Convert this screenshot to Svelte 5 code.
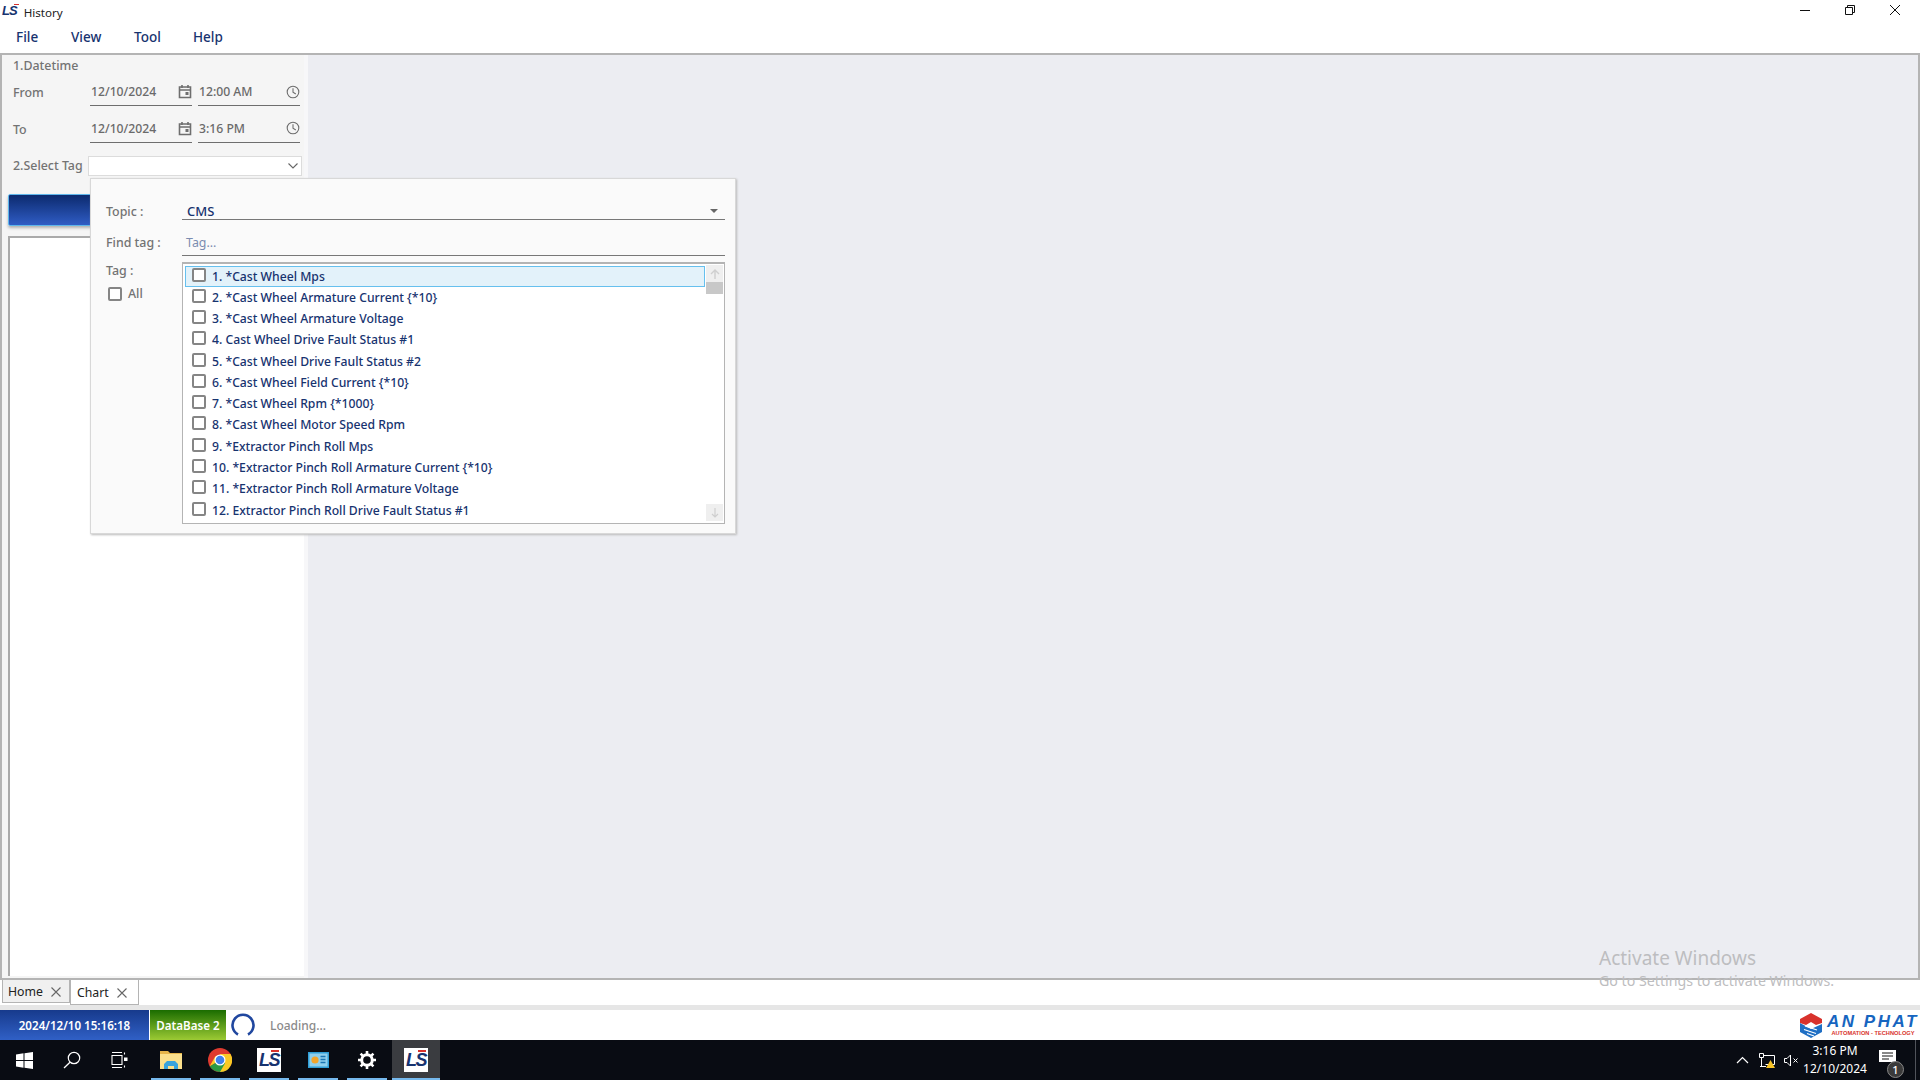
<script>
  const tags = [
    "1. *Cast Wheel Mps",
    "2. *Cast Wheel Armature Current {*10}",
    "3. *Cast Wheel Armature Voltage",
    "4. Cast Wheel Drive Fault Status #1",
    "5. *Cast Wheel Drive Fault Status #2",
    "6. *Cast Wheel Field Current {*10}",
    "7. *Cast Wheel Rpm {*1000}",
    "8. *Cast Wheel Motor Speed Rpm",
    "9. *Extractor Pinch Roll Mps",
    "10. *Extractor Pinch Roll Armature Current {*10}",
    "11. *Extractor Pinch Roll Armature Voltage",
    "12. Extractor Pinch Roll Drive Fault Status #1",
  ];
  const menus = ["File", "View", "Tool", "Help"];
</script>

{#snippet calendar()}
  <svg class="ico" width="14" height="15" viewBox="0 0 14 15">
    <path d="M1.5 3h11v10.5h-11z M1.5 6h11" fill="none" stroke="#6e6e6e" stroke-width="1.6" />
    <path d="M4 1v3M10 1v3" stroke="#6e6e6e" stroke-width="1.6" />
    <rect x="7.5" y="8" width="3" height="3" fill="#6e6e6e" />
  </svg>
{/snippet}

{#snippet clock()}
  <svg class="ico" width="14" height="14" viewBox="0 0 14 14">
    <circle cx="7" cy="7" r="5.8" fill="none" stroke="#6e6e6e" stroke-width="1.1" />
    <path d="M7 3.2V7.2L9.8 9" fill="none" stroke="#6e6e6e" stroke-width="1.1" />
  </svg>
{/snippet}

{#snippet lsLogo()}
  <span class="ls-logo">LS<i></i></span>
{/snippet}

<div class="window">
  <div class="titlebar">
    <span class="title-logo">LS<i></i></span>
    <span class="title-text">History</span>
    <div class="win-controls">
      <svg width="10" height="10" viewBox="0 0 10 10"><path d="M0 5.5h10" stroke="#111" /></svg>
      <svg width="10" height="10" viewBox="0 0 10 10"><path d="M.5 2.5h7v7h-7zM2.5 2.5v-2h7v7h-2" fill="none" stroke="#111" /></svg>
      <svg width="10" height="10" viewBox="0 0 10 10"><path d="M0 0l10 10M10 0L0 10" stroke="#111" /></svg>
    </div>
  </div>
  <nav class="menubar">
    {#each menus as m}<span>{m}</span>{/each}
  </nav>

  <div class="workspace">
    <aside class="sidebar">
      <div class="section">1.Datetime</div>
      <div class="date-row first">
        <label>From</label>
        <div class="field date"><span>12/10/2024</span>{@render calendar()}</div>
        <div class="field time"><span>12:00 AM</span>{@render clock()}</div>
      </div>
      <div class="date-row">
        <label>To</label>
        <div class="field date"><span>12/10/2024</span>{@render calendar()}</div>
        <div class="field time"><span>3:16 PM</span>{@render clock()}</div>
      </div>
      <div class="tag-row">
        <span>2.Select Tag</span>
        <div class="combo">
          <svg width="10" height="6" viewBox="0 0 10 6"><path d="M.5 .5L5 5 9.500 .5" fill="none" stroke="#666" stroke-width="1.1" /></svg>
        </div>
      </div>
      <div class="blue-btn"></div>
      <div class="tree"></div>
    </aside>
    <main class="content"></main>

    <div class="popup">
      <div class="pop-row topic">
        <span class="pop-label">Topic :</span>
        <div class="pop-input"><span>CMS</span><i class="caret"></i></div>
      </div>
      <div class="pop-row find">
        <span class="pop-label">Find tag :</span>
        <div class="pop-input placeholder"><span>Tag...</span></div>
      </div>
      <div class="pop-body">
        <div class="pop-side">
          <span class="pop-label">Tag :</span>
          <div class="all"><i class="check"></i><span>All</span></div>
        </div>
        <div class="list">
          <div class="rows">
            {#each tags as t, i}
              <div class="row" class:active={i === 0}><i class="check"></i><span>{t}</span></div>
            {/each}
          </div>
          <div class="scroll">
            <div class="sbtn">
              <svg width="10" height="10" viewBox="0 0 10 10"><path d="M5 10V1M1 5l4-4 4 4" fill="none" stroke="#cfcfcf" stroke-width="1.4" /></svg>
            </div>
            <div class="thumb"></div>
            <div class="track"></div>
            <div class="sbtn">
              <svg width="10" height="10" viewBox="0 0 10 10"><path d="M5 0v9M2 6l3 3 3-3" fill="none" stroke="#cfcfcf" stroke-width="1.2" /></svg>
            </div>
          </div>
        </div>
      </div>
    </div>
  </div>

  <div class="tabs">
    <div class="tab home"><span>Home</span><svg width="10" height="10" viewBox="0 0 10 10"><path d="M.5 .5l9 9M9.500 .5l-9 9" stroke="#666" stroke-width="1.100" /></svg></div>
    <div class="tab chart"><span>Chart</span><svg width="10" height="10" viewBox="0 0 10 10"><path d="M.5 .5l9 9M9.500 .5l-9 9" stroke="#666" stroke-width="1.100" /></svg></div>
  </div>
  <div class="tab-gap"></div>

  <div class="status">
    <div class="clock-box">2024/12/10 15:16:18</div>
    <div class="db-box">DataBase 2</div>
    <svg class="spinner" width="24" height="24" viewBox="0 0 24 24">
      <path d="M7 21.500A10.500 10.500 0 1 1 17 21.500" fill="none" stroke="#20479f" stroke-width="2.600" />
    </svg>
    <span class="loading">Loading...</span>
    <div class="brand">
      <svg width="22" height="25" viewBox="0 0 22 25">
        <path d="M11 0L22 6v4l-6 2-5-3-5 3-6-2V6z" fill="#d8322c" />
        <path d="M0 10l11 6 11-5v8l-11 6-11-6z" fill="#1f6fc4" />
        <path d="M5 13l12 4M4 16.500l12 4M7 20.500l7 2.500" stroke="#fff" stroke-width="1.200" />
      </svg>
      <div class="brand-text">
        <b>AN PHAT</b>
        <small>AUTOMATION - TECHNOLOGY</small>
      </div>
    </div>
  </div>

  <footer class="taskbar">
    <div class="task"><svg width="17" height="17" viewBox="0 0 17 17"><path d="M0 2.400L7.500 1.300V8H0zM8.500 1.200L17 0V8H8.500zM0 9h7.500v6.700L0 14.600zM8.500 9H17v8l-8.500-1.200z" fill="#fff" /></svg></div>
    <div class="task"><svg width="18" height="18" viewBox="0 0 18 18"><circle cx="11" cy="7" r="5.700" fill="none" stroke="#fff" stroke-width="1.200" /><path d="M7 11.200L1 17" stroke="#fff" stroke-width="1.300" /></svg></div>
    <div class="task"><svg width="18" height="16" viewBox="0 0 18 16"><path d="M1 3.500h10v9H1zM1 .5h10M1 15.500h10M13.500 .5v2M13.500 13.500v2" fill="none" stroke="#fff" stroke-width="1.100" /><rect x="13" y="5.500" width="3.500" height="3.500" fill="#fff" /></svg></div>
    <div class="task open"><svg width="22" height="22" viewBox="0 0 22 22"><path d="M0 2h8l2 2h12v3H0z" fill="#e6b54a" /><path d="M0 5h22v15H0z" fill="#fbe08c" /><path d="M4 20v-5l3-3h8l3 3v5h-4v-3H8v3z" fill="#39a3dc" /></svg></div>
    <div class="task open"><svg width="24" height="24" viewBox="0 0 24 24"><circle cx="12" cy="12" r="12" fill="#de3b30" /><path d="M12 12L1.800 18.300A12 12 0 0 0 12 24a12 12 0 0 0 10.400-6z" fill="#2a9a45" /><path d="M12 12l-10.400 6.300L7.500 8zM12 6h10.500A12 12 0 0 1 12 24l5.200-9z" fill="#f9c925" /><circle cx="12" cy="12" r="5.500" fill="#fff" /><circle cx="12" cy="12" r="4.300" fill="#3f81ec" /></svg></div>
    <div class="task open">{@render lsLogo()}</div>
    <div class="task open"><svg width="21" height="16" viewBox="0 0 21 16"><rect width="21" height="16" fill="#2f9fd8" /><rect x="1.500" y="1.500" width="18" height="13" fill="#8fd0ee" /><circle cx="7" cy="8" r="3.600" fill="#f2a52c" /><path d="M12.500 4.500h5M12.500 7.500h5M12.500 10.500h5" stroke="#1b76b5" stroke-width="1.500" /></svg></div>
    <div class="task open"><svg width="18" height="18" viewBox="0 0 18 18"><circle cx="9" cy="9" r="5.300" fill="none" stroke="#fff" stroke-width="3" /><path d="M9 0v3.500M9 14.500V18M0 9h3.500M14.500 9H18M2.600 2.600l2.500 2.500M12.900 12.900l2.500 2.500M15.400 2.600l-2.500 2.500M5.100 12.900l-2.500 2.500" stroke="#fff" stroke-width="2.600" /></svg></div>
    <div class="task open current">{@render lsLogo()}</div>

    <div class="tray">
      <svg width="13" height="8" viewBox="0 0 13 8"><path d="M1 7l5.500-5.500L12 7" fill="none" stroke="#fff" stroke-width="1.200" /></svg>
      <svg class="net" width="17" height="15" viewBox="0 0 17 15"><path d="M.5 .5h4v4h-4zM4.500 2.500h11v9h-9M2.500 4.500v9M1 13.500h6" fill="none" stroke="#fff" /><path d="M11.500 7l4.500 8H7z" fill="#f7c325" /></svg>
      <svg width="15" height="13" viewBox="0 0 15 13"><path d="M.5 4.500h2.500L6.500 1v11L3 8.500H.5z" fill="none" stroke="#fff" /><path d="M9.500 4.500l4 4M13.500 4.500l-4 4" stroke="#fff" /></svg>
      <div class="tray-clock"><span>3:16 PM</span><span>12/10/2024</span></div>
      <div class="notify">
        <svg width="17" height="15" viewBox="0 0 17 15"><path d="M0 0h17v12H0z" fill="#fff" /><path d="M3 3h11M3 6h11M3 9h7" stroke="#111" /></svg>
        <span class="badge">1</span>
      </div>
    </div>
    <div class="show-desktop"></div>
  </footer>

  <div class="activate">
    <div>Activate Windows</div>
    <small>Go to Settings to activate Windows.</small>
  </div>
</div>

<style>
  :global(body) {
    margin: 0;
    background: #fff;
  }

  .window {
    position: relative;
    width: 1920px;
    height: 1080px;
    display: flex;
    flex-direction: column;
    overflow: hidden;
    font-family: "Noto Sans", "Open Sans", sans-serif;
    font-size: 12.400px;
    font-weight: 500;
    color: #737373;
  }

  .titlebar {
    height: 24px;
    display: flex;
    align-items: center;
    flex: none;
  }
  .title-logo {
    position: relative;
    margin: -3px 0 0 2px;
    font: italic 900 13px/1 "Liberation Sans", sans-serif;
    letter-spacing: -1px;
    color: #17336f;
  }
  .title-logo i {
    position: absolute;
    top: 0;
    right: -2px;
    width: 5px;
    height: 1px;
    background: #d8322c;
  }
  .title-text {
    margin-left: 7px;
    font-size: 11.600px;
    font-weight: 400;
    color: #222;
  }
  .win-controls {
    margin-left: auto;
    margin-right: 20px;
    margin-top: -5px;
    display: flex;
    gap: 35px;
  }

  .menubar {
    height: 29px;
    flex: none;
    display: flex;
    align-items: center;
    box-sizing: border-box;
    padding: 0 0 4px 16px;
    font-size: 13.500px;
    font-weight: 500;
    color: #17336f;
  }
  .menubar span:nth-child(1) { width: 55px; }
  .menubar span:nth-child(2) { width: 63px; }
  .menubar span:nth-child(3) { width: 59px; }

  .workspace {
    position: relative;
    flex: 1;
    display: flex;
    border: 2px solid #b4b4b4;
    background: #ecedf2;
    min-height: 0;
  }

  .sidebar {
    width: 306px;
    flex: none;
    display: flex;
    flex-direction: column;
    background: #f5f5f5;
    border-right: 4px solid #f7f7f9;
    padding: 0 0 0 6px;
    box-sizing: border-box;
  }
  .section {
    margin: 2px 0 0 5px;
    line-height: 18px;
  }
  .date-row {
    display: flex;
    align-items: flex-end;
    height: 36.500px;
    margin-left: 5px;
    flex: none;
  }
  .date-row.first { height: 31px; }
  .date-row label {
    width: 77px;
    line-height: 20px;
    padding-bottom: 3px;
  }
  .field {
    display: flex;
    align-items: center;
    justify-content: space-between;
    height: 26px;
    box-sizing: border-box;
    border-bottom: 1px solid #6e6e6e;
    padding: 0 0 2px 1px;
    font-size: 12.200px;
    color: #6a6a6a;
  }
  .date { width: 102px; margin-right: 6px; }
  .time { width: 102px; }
  .ico { flex: none; }
  .tag-row {
    display: flex;
    align-items: center;
    margin: 13px 0 0 5px;
    height: 20px;
  }
  .tag-row span { width: 75px; flex: none; white-space: nowrap; }
  .combo {
    width: 214px;
    height: 20px;
    flex: none;
    box-sizing: border-box;
    background: #fff;
    border: 1px solid #dcdcdc;
    display: flex;
    align-items: center;
    justify-content: flex-end;
    padding-right: 3px;
  }
  .blue-btn {
    margin-top: 18px;
    height: 32px;
    width: 120px;
    flex: none;
    box-sizing: border-box;
    border-radius: 2px;
    background: linear-gradient(#0c2a6e, #2f5cc4);
    border: 1px solid #5fb6ea;
    box-shadow: 0 2px 3px #b0b0b0;
  }
  .tree {
    margin-top: 10px;
    flex: 1;
    background: #fff;
    border-left: 2px solid #aaa;
    border-top: 2px solid #aaa;
    margin-bottom: 2px;
  }
  .content { flex: 1; }

  .popup {
    position: absolute;
    left: 88px;
    top: 123px;
    width: 646px;
    height: 356px;
    box-sizing: border-box;
    background: #fafafa;
    border: 1px solid #d8d8d8;
    box-shadow: 1px 1px 2px #bbb;
    padding: 0 10px 0 15px;
    display: flex;
    flex-direction: column;
  }
  .pop-row {
    display: flex;
    flex: none;
  }
  .topic { height: 30px; margin-top: 11px; }
  .find { height: 36px; }
  .pop-label {
    width: 76px;
    flex: none;
    line-height: 43px;
    font-size: 12.400px;
    white-space: nowrap;
  }
  .find .pop-label { line-height: 45px; }
  .pop-input {
    flex: 1;
    display: flex;
    align-items: center;
    justify-content: space-between;
    box-sizing: border-box;
    border-bottom: 1px solid #777;
    padding: 12px 7px 0 5px;
    font-size: 13px;
    color: #17336f;
  }
  .find .pop-input { height: 36px; padding: 9px 0 0 4px; }
  .placeholder { color: #7b8cb0; font-size: 12.400px; font-weight: 400; }
  .caret {
    width: 0;
    height: 0;
    border-left: 4px solid transparent;
    border-right: 4px solid transparent;
    border-top: 4px solid #666;
  }
  .pop-body {
    flex: 1;
    display: flex;
    margin-top: 6px;
    margin-bottom: 9px;
    min-height: 0;
  }
  .pop-side {
    width: 76px;
    flex: none;
  }
  .pop-side .pop-label { display: block; line-height: 16px; margin-top: 1px; }
  .all {
    display: flex;
    align-items: center;
    gap: 6px;
    margin: 6px 0 0 2px;
    font-size: 12.400px;
  }
  .check {
    display: block;
    width: 14px;
    height: 14px;
    flex: none;
    box-sizing: border-box;
    border: 2px solid #858585;
    border-radius: 2px;
    background: #fff;
  }
  .list {
    flex: 1;
    display: flex;
    background: #fff;
    border: 1px solid #b4b4b4;
    border-top-width: 2px;
    padding: 1px 1px 2px 2px;
    min-width: 0;
  }
  .rows {
    flex: 1;
    display: flex;
    flex-direction: column;
    min-width: 0;
    padding-top: .5px;
  }
  .row {
    height: 21.270px;
    flex: none;
    display: flex;
    align-items: center;
    gap: 6px;
    padding-left: 7px;
    box-sizing: border-box;
    font-size: 12.200px;
    color: #17336f;
    white-space: nowrap;
  }
  .row .check { margin-top: -3px; }
  .row.active {
    background: #e3f2fa;
    outline: 1px solid #66c0ee;
    outline-offset: -1px;
  }
  .scroll {
    width: 17px;
    flex: none;
    display: flex;
    flex-direction: column;
    margin-left: 1px;
  }
  .sbtn {
    height: 17px;
    flex: none;
    background: #efefef;
    display: flex;
    align-items: center;
    justify-content: center;
  }
  .thumb {
    height: 12px;
    flex: none;
    background: #c8c8c8;
  }
  .track { flex: 1; }

  .tabs {
    height: 25px;
    flex: none;
    display: flex;
    align-items: flex-start;
    padding-left: 2px;
    font-size: 12.300px;
    font-weight: 400;
    color: #222;
  }
  .tab {
    display: flex;
    align-items: center;
    box-sizing: border-box;
    border: 1px solid #b4b4b4;
    border-top: 0;
    padding: 1px 0 0 5px;
    gap: 8px;
  }
  .home { width: 68px; height: 23px; background: #f0f0f0; }
  .chart { width: 69px; height: 25px; background: #fff; padding-left: 6px; }
  .tab-gap {
    height: 5px;
    flex: none;
    background: #e6e6e6;
  }

  .status {
    height: 30px;
    flex: none;
    display: flex;
    align-items: center;
    background: #fff;
  }
  .clock-box {
    width: 149px;
    height: 100%;
    display: flex;
    align-items: center;
    justify-content: center;
    background: linear-gradient(#173a8c, #3060c6);
    color: #fff;
    font-size: 11.600px;
    font-weight: 600;
  }
  .db-box {
    width: 76px;
    height: 100%;
    margin-left: 1px;
    display: flex;
    align-items: center;
    justify-content: center;
    background: linear-gradient(#1a6c00, #9cca34);
    color: #fff;
    font-size: 11.600px;
    font-weight: 600;
  }
  .spinner { margin-left: 5px; }
  .loading {
    margin-left: 15px;
    font-size: 12px;
    font-weight: 500;
    color: #8a8a8a;
  }
  .brand {
    margin-left: auto;
    display: flex;
    align-items: center;
    gap: 4px;
    width: 120px;
    flex: none;
  }
  .brand-text {
    display: flex;
    flex-direction: column;
    align-items: center;
    flex: 1;
  }
  .brand b {
    font: italic 900 17px/15px "Liberation Sans", sans-serif;
    color: #1665c0;
    letter-spacing: 2.500px;
    white-space: nowrap;
  }
  .brand small {
    font: 700 5.700px/8px "Liberation Sans", sans-serif;
    color: #d8322c;
    white-space: nowrap;
  }

  .taskbar {
    height: 40px;
    flex: none;
    display: flex;
    align-items: center;
    background: #090c13;
    color: #fff;
  }
  .task {
    position: relative;
    width: 48px;
    height: 100%;
    flex: none;
    margin-right: 1px;
    display: flex;
    align-items: center;
    justify-content: center;
  }
  .task:nth-child(-n + 3) { margin-right: 0; }
  .task:nth-child(4) { margin-left: 3px; }
  .task.open::after {
    content: "";
    position: absolute;
    left: 4px;
    right: 4px;
    bottom: 0;
    height: 2px;
    background: #76b9ed;
  }
  .task.current { background: #3a3c40; }
  .task.current::after { left: 0; right: 0; }
  .ls-logo {
    position: relative;
    width: 24px;
    height: 24px;
    display: flex;
    align-items: center;
    justify-content: center;
    background: #fff;
    font: italic 900 18px/1 "Liberation Sans", sans-serif;
    letter-spacing: -1.500px;
    color: #17336f;
  }
  .ls-logo i {
    position: absolute;
    top: 2px;
    right: 2px;
    width: 8px;
    height: 2px;
    background: #d8322c;
  }

  .tray {
    margin-left: auto;
    display: flex;
    align-items: center;
    height: 100%;
  }
  .tray > svg:first-child { margin-right: 10px; }
  .tray .net { margin-right: 8px; }
  .tray-clock {
    width: 72px;
    display: flex;
    flex-direction: column;
    align-items: center;
    font-size: 12px;
    font-weight: 400;
    line-height: 18px;
    color: #fff;
  }
  .notify {
    position: relative;
    width: 44px;
    height: 100%;
    box-sizing: border-box;
    padding-left: 8px;
    display: flex;
    align-items: center;
    margin-top: -6px;
  }
  .badge {
    position: absolute;
    left: 16px;
    top: 24px;
    width: 15px;
    height: 15px;
    border-radius: 50%;
    background: #3a3a3a;
    border: 1px solid #888;
    font-size: 11px;
    line-height: 15px;
    text-align: center;
    color: #fff;
  }
  .show-desktop {
    width: 5px;
    height: 100%;
    box-sizing: border-box;
    border-left: 1px solid #50535a;
  }

  .activate {
    position: absolute;
    left: 1599px;
    top: 945px;
    color: #bdbdc0;
    font-size: 19px;
    font-weight: 400;
    line-height: 27px;
    pointer-events: none;
  }
  .activate small {
    display: block;
    font-size: 14.200px;
    line-height: 18px;
  }
</style>
